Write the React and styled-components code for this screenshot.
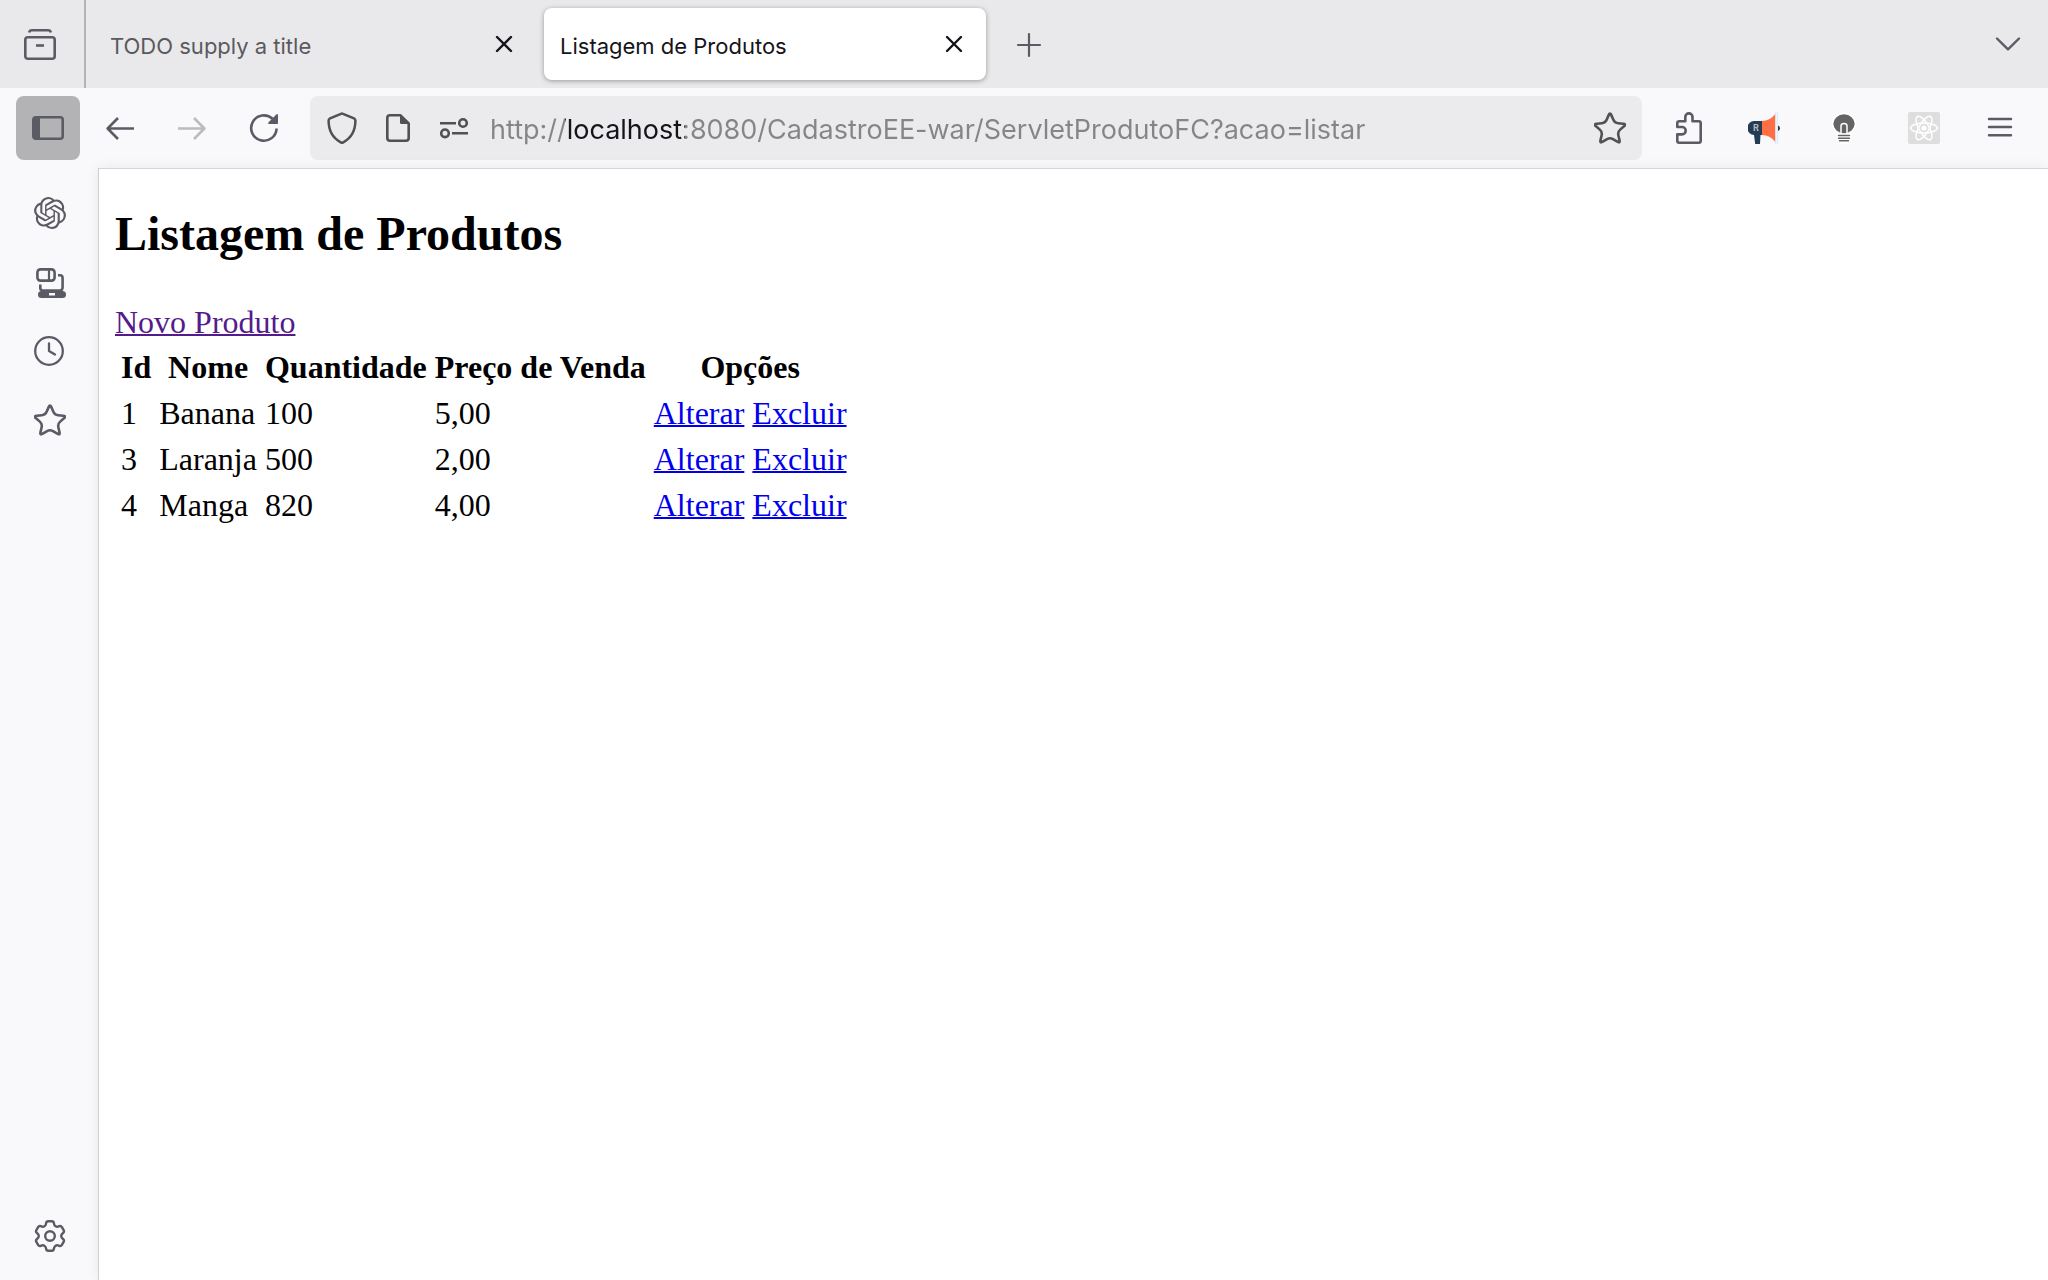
import React from "react";
import styled, { createGlobalStyle } from "styled-components";
import { SiOpenai } from "react-icons/si";

const ui = `Inter, "Liberation Sans", sans-serif`;
const serif = `"Liberation Serif", "Times New Roman", serif`;

const GlobalStyle = createGlobalStyle`
  *, *::before, *::after { box-sizing: border-box; }
  body { margin: 0; background: #f9f9fb; }
`;

const Window = styled.div`
  display: flex;
  flex-direction: column;
  min-height: 100vh;
  color: #5b5b66;
  font-family: ${ui};
`;

const TabBar = styled.header`
  display: flex;
  align-items: stretch;
  height: 88px;
  padding-right: 8px;
  background: #e9e9eb;
`;

const IconButton = styled.button`
  display: flex;
  align-items: center;
  justify-content: center;
  flex: none;
  width: ${(p) => p.$width || 64}px;
  height: 64px;
  padding: 0;
  border: 0;
  border-radius: 8px;
  background: ${(p) => (p.$pressed ? "#b3b3b5" : "transparent")};
  color: ${(p) => (p.$muted ? "#bbbbc0" : "#5b5b66")};
`;

const ViewArea = styled.div`
  display: flex;
  align-items: center;
  padding: 0 12px 0 8px;
  border-right: 2px solid #b3b3b5;
`;

const Tabs = styled.nav`
  display: flex;
  flex: 1;
  align-items: center;
  gap: 8px;
  padding-left: 8px;
`;

const Tab = styled.div`
  display: flex;
  align-items: center;
  justify-content: space-between;
  width: 442px;
  height: 72px;
  padding: 0 16px;
  border-radius: 8px;
  background: ${(p) => (p.$active ? "#fff" : "transparent")};
  box-shadow: ${(p) => (p.$active ? "0 1px 5px rgba(0, 0, 0, 0.35)" : "none")};
`;

const TabTitle = styled.span`
  padding-top: 4px;
  color: ${(p) => (p.$active ? "#15141a" : "#5a5a5e")};
  font-size: 22px;
  line-height: 32px;
  white-space: nowrap;
`;

const CloseButton = styled(IconButton)`
  height: 32px;
  color: #15141a;
`;

const TabEnd = styled.div`
  display: flex;
  align-items: center;
`;

const Toolbar = styled.div`
  display: flex;
  align-items: center;
  gap: 14px;
  height: 80px;
  padding: 0 16px;
`;

const ButtonGroup = styled.div`
  display: flex;
  align-items: center;
  gap: ${(p) => p.$gap || 0}px;
`;

const AddressBar = styled.form`
  display: flex;
  flex: 1;
  align-items: center;
  gap: 20px;
  min-width: 0;
  height: 64px;
  padding: 0 16px;
  border-radius: 8px;
  background: #ebebed;
`;

const AddressButton = styled(IconButton)`
  height: 32px;
  color: #505055;
`;

/* The host name is darker than the rest of the address. */
const AddressInput = styled.input`
  flex: 1;
  min-width: 0;
  height: 64px;
  padding: 2px 0 0;
  border: 0;
  outline: 0;
  background: linear-gradient(90deg, #858587 75px, #15141a 75px 195px, #858587 195px);
  background-clip: text;
  -webkit-background-clip: text;
  color: transparent;
  font-family: ${ui};
  font-size: 27px;
`;

const Main = styled.div`
  display: flex;
  flex: 1;
`;

const Sidebar = styled.aside`
  display: flex;
  flex-direction: column;
  align-items: center;
  justify-content: space-between;
  width: 98px;
  padding: 13px 0 12px 2px;
`;

const SideList = styled.div`
  display: flex;
  flex-direction: column;
  gap: 5px;
`;

const Page = styled.main`
  flex: 1;
  padding: 37px 16px 16px;
  border-top: 1px solid #d5d5d8;
  border-left: 1px solid #cfcfd3;
  background: #fff;
  box-shadow: 0 0 12px rgba(0, 0, 0, 0.07);
  color: #000;
  font-family: ${serif};
  font-size: 32px;
  line-height: 38px;
`;

const Heading = styled.h2`
  margin: 0 0 41px;
  font-size: 48px;
  line-height: 56px;
`;

const Link = styled.a`
  color: ${(p) => (p.$visited ? "#551a8b" : "#0000ee")};
  text-decoration: underline;
  text-decoration-thickness: 2px;
`;

const Table = styled.table`
  margin-top: 1px;
  border-spacing: 4px;

  th,
  td {
    padding: 2px;
  }
`;

/* Builds a closed path through the points, with rounded corners. */
function roundedPath(points, radius) {
  const n = points.length;
  const toward = (a, b) => {
    const d = Math.hypot(b[0] - a[0], b[1] - a[1]);
    const t = Math.min(radius / d, 0.5);
    return `${(a[0] + (b[0] - a[0]) * t).toFixed(2)} ${(a[1] + (b[1] - a[1]) * t).toFixed(2)}`;
  };
  return (
    points
      .map((p, i) => {
        const prev = points[(i + n - 1) % n];
        const next = points[(i + 1) % n];
        return `${i ? "L" : "M"}${toward(p, prev)}Q${p[0].toFixed(2)} ${p[1].toFixed(2)} ${toward(p, next)}`;
      })
      .join("") + "Z"
  );
}

const polar = (cx, cy, r, deg) => [
  cx + r * Math.sin((deg * Math.PI) / 180),
  cy - r * Math.cos((deg * Math.PI) / 180),
];

const starPath = roundedPath(
  Array.from({ length: 10 }, (_, i) => polar(16, 17.4, i % 2 ? 8 : 17.4, i * 36)),
  3.4
);

const gearPath = roundedPath(
  Array.from({ length: 6 }, (_, i) => i * 60).flatMap((a) => [
    polar(16, 16, 11.3, a - 22),
    polar(16, 16, 15.2, a - 14),
    polar(16, 16, 15.2, a + 14),
    polar(16, 16, 11.3, a + 22),
  ]),
  2
);

const Icon = ({ children, width = 2.6, size = 32 }) => (
  <svg
    width={size}
    height={size}
    viewBox={`0 0 ${size} ${size}`}
    fill="none"
    stroke="currentColor"
    strokeWidth={width}
    strokeLinecap="round"
    strokeLinejoin="round"
    aria-hidden="true"
  >
    {children}
  </svg>
);

const ViewIcon = () => (
  <Icon>
    <rect x="1.3" y="9.3" width="29.4" height="21.4" rx="2.5" />
    <path d="M5.2 4.4Q5.6 2.3 8 2.3H24Q26.4 2.3 26.8 4.4" strokeLinecap="butt" />
    <path d="M12 17.5H20" strokeLinecap="butt" />
  </Icon>
);
const SidebarIcon = () => (
  <Icon>
    <rect x="1.3" y="5.3" width="29.4" height="21.4" rx="2.5" />
    <path d="M1 6H8V26H1Z" fill="currentColor" stroke="none" />
  </Icon>
);
const BackIcon = () => (
  <Icon>
    <path d="M30 16.5H4M14 6 3.6 16.5 14 27" strokeLinecap="butt" />
  </Icon>
);
const ForwardIcon = () => (
  <Icon>
    <path d="M2 16.5H28M18 6 28.4 16.5 18 27" strokeLinecap="butt" />
  </Icon>
);
const ReloadIcon = () => (
  <Icon>
    <path d="M28.6 16.5A12.7 12.7 0 1 1 24.6 6.8" strokeLinecap="butt" />
    <path d="M30 2.8V11.2Q30 12 29.2 12H20.8Q19.6 11.4 20.3 10.5L28.6 2.3Q29.6 1.6 30 2.8Z" fill="currentColor" stroke="none" />
  </Icon>
);
const CloseIcon = () => (
  <Icon width={2.4}>
    <path d="M9 9 23 23M23 9 9 23" />
  </Icon>
);
const PlusIcon = () => (
  <Icon width={2.2}>
    <path d="M16 6V28M5 17H27" />
  </Icon>
);
const ChevronIcon = () => (
  <Icon width={2.4}>
    <path d="M5 10.5 16 21.3 27 10.5" />
  </Icon>
);
const ShieldIcon = () => (
  <Icon width={2.5}>
    <path d="M15 1.8Q16 1.2 17 1.8L28 6.3Q29.4 7 29.4 8.6Q29.4 24 17.2 30.3Q16 31 14.8 30.3Q2.6 24 2.6 8.6Q2.6 7 4 6.3Z" />
  </Icon>
);
const DocIcon = () => (
  <Icon>
    <path d="M7.5 3.3H18.5L26.7 11.5V26Q26.7 28.7 24 28.7H8Q5.3 28.7 5.3 26V6Q5.3 3.3 8 3.3Z" />
    <path d="M18 3 27 12H19.5Q18 12 18 10.5Z" fill="currentColor" stroke="none" />
  </Icon>
);
const PermissionsIcon = () => (
  <Icon>
    <path d="M2 11.3H18M14 21.3H30" strokeLinecap="butt" />
    <circle cx="25" cy="11" r="3.8" />
    <circle cx="7" cy="21.3" r="3.8" />
  </Icon>
);
const StarIcon = () => (
  <Icon>
    <path d={starPath} />
  </Icon>
);
const PuzzleIcon = () => (
  <Icon>
    <path d="M5.3 15V11.3Q5.3 9.3 7.3 9.3H13.3V5A3.6 3.6 0 0 1 20.5 5V9.3H26.7Q28.7 9.3 28.7 11.3V28.7Q28.7 30.7 26.7 30.7H7.3Q5.3 30.7 5.3 28.7V22.4H10A3.7 3.7 0 0 0 10 15Z" />
  </Icon>
);
const MegaphoneIcon = () => (
  <Icon>
    <g stroke="none">
      <path d="M6 9H14V23H12.5L12 32H7.2L6 23A6.5 7 0 0 1 6 9Z" fill="#243c54" />
      <path d="M14 9Q22 9 27.3 2V30Q22 23 14 23Z" fill="#ff6f43" />
      <path d="M27.3 0H30V32H27.3Z" fill="#cfe6f7" />
      <path d="M28.4 0H29.2V32H28.4Z" fill="#fff" />
      <path d="M30 13.5Q32 14 32 16.3Q32 18.6 30 19Z" fill="#243c54" />
      <text x="5" y="19" fill="#b9b9bd" fontFamily="Inter, sans-serif" fontSize="9" fontWeight="700">R</text>
    </g>
  </Icon>
);
const BulbIcon = () => (
  <Icon>
    <g stroke="#fff" strokeWidth="1.5">
      <path d="M10 19.5H22V29Q21 31 16 31Q11 31 10 29Z" fill="#fff" />
      <ellipse cx="16" cy="11.8" rx="11.4" ry="10.2" fill="#646464" />
      <path d="M13 21.5V14Q13 11.5 16 11.5Q19 11.5 19 14V21.5" />
    </g>
    <path d="M10.5 23.5H21.5M10.5 26.2H21.5M11.5 28.8H20.5" stroke="#646464" strokeWidth="1.4" />
  </Icon>
);
const AtomIcon = () => (
  <Icon>
    <rect width="32" height="32" rx="2" fill="#dedede" stroke="none" />
    <g stroke="#fff" strokeWidth="1.5">
      <ellipse cx="16" cy="16" rx="13.3" ry="5" />
      <ellipse cx="16" cy="16" rx="13.3" ry="5" transform="rotate(60 16 16)" />
      <ellipse cx="16" cy="16" rx="13.3" ry="5" transform="rotate(120 16 16)" />
      <circle cx="16" cy="16" r="2.6" fill="#fff" stroke="none" />
    </g>
  </Icon>
);
const MenuIcon = () => (
  <Icon width={2.4}>
    <path d="M5 7H27M5 15H27M5 23.3H27" />
  </Icon>
);
const DevicesIcon = () => (
  <Icon>
    <rect x="3.4" y="3.4" width="17.2" height="11.2" rx="3" />
    <path d="M15 3V15" strokeWidth="2.2" />
    <path d="M24 9.3H26Q28.6 9.3 28.6 12V21Q28.6 24.5 26 24.5H9Q6.3 24.5 6.3 22V18.5" strokeLinecap="butt" />
    <path d="M7.5 25H28.5A3.5 3.5 0 0 1 28.5 32H7.5A3.5 3.5 0 0 1 7.5 25ZM15 27V29.5H21V27Z" fill="currentColor" fillRule="evenodd" stroke="none" />
  </Icon>
);
const ClockIcon = () => (
  <Icon width={2.3}>
    <circle cx="15" cy="16" r="13.8" />
    <path d="M15 8.5V16L21 19.5" />
  </Icon>
);
const GearIcon = () => (
  <Icon width={2.4}>
    <path d={gearPath} />
    <circle cx="16" cy="16" r="4.8" />
  </Icon>
);

const tabs = [
  { title: "TODO supply a title", active: false },
  { title: "Listagem de Produtos", active: true },
];

const sideItems = [
  { label: "ChatGPT", icon: <SiOpenai size={32} aria-hidden="true" /> },
  { label: "Abas sincronizadas", icon: <DevicesIcon /> },
  { label: "Histórico", icon: <ClockIcon /> },
  { label: "Favoritos", icon: <StarIcon /> },
];

const products = [
  { id: 1, name: "Banana", quantity: 100, price: "5,00" },
  { id: 3, name: "Laranja", quantity: 500, price: "2,00" },
  { id: 4, name: "Manga", quantity: 820, price: "4,00" },
];

export default function App() {
  return (
    <Window>
      <GlobalStyle />
      <TabBar>
        <ViewArea>
          <IconButton aria-label="Firefox View"><ViewIcon /></IconButton>
        </ViewArea>
        <Tabs>
          {tabs.map((tab) => (
            <Tab key={tab.title} $active={tab.active}>
              <TabTitle $active={tab.active}>{tab.title}</TabTitle>
              <CloseButton $width={32} aria-label="Fechar aba"><CloseIcon /></CloseButton>
            </Tab>
          ))}
          <IconButton $width={70} aria-label="Nova aba"><PlusIcon /></IconButton>
        </Tabs>
        <TabEnd>
          <IconButton aria-label="Listar abas"><ChevronIcon /></IconButton>
        </TabEnd>
      </TabBar>

      <Toolbar>
        <ButtonGroup $gap={8}>
          <IconButton $pressed aria-label="Painel lateral"><SidebarIcon /></IconButton>
          <IconButton aria-label="Voltar"><BackIcon /></IconButton>
          <IconButton $muted aria-label="Avançar"><ForwardIcon /></IconButton>
          <IconButton aria-label="Recarregar"><ReloadIcon /></IconButton>
        </ButtonGroup>
        <AddressBar>
          <ButtonGroup $gap={24}>
            <AddressButton type="button" $width={32} aria-label="Proteção"><ShieldIcon /></AddressButton>
            <AddressButton type="button" $width={32} aria-label="Informações"><DocIcon /></AddressButton>
            <AddressButton type="button" $width={32} aria-label="Permissões"><PermissionsIcon /></AddressButton>
          </ButtonGroup>
          <AddressInput
            aria-label="Endereço"
            defaultValue="http://localhost:8080/CadastroEE-war/ServletProdutoFC?acao=listar"
          />
          <AddressButton type="button" $width={32} aria-label="Favoritar"><StarIcon /></AddressButton>
        </AddressBar>
        <ButtonGroup $gap={4}>
          <IconButton aria-label="Extensões"><PuzzleIcon /></IconButton>
          <ButtonGroup>
            <IconButton $width={80} aria-label="Megafone"><MegaphoneIcon /></IconButton>
            <IconButton $width={80} aria-label="Lâmpada"><BulbIcon /></IconButton>
            <IconButton $width={80} aria-label="React"><AtomIcon /></IconButton>
          </ButtonGroup>
          <IconButton aria-label="Menu"><MenuIcon /></IconButton>
        </ButtonGroup>
      </Toolbar>

      <Main>
        <Sidebar>
          <SideList>
            {sideItems.map((item) => (
              <IconButton key={item.label} aria-label={item.label}>{item.icon}</IconButton>
            ))}
          </SideList>
          <IconButton aria-label="Configurações"><GearIcon /></IconButton>
        </Sidebar>
        <Page>
          <Heading>Listagem de Produtos</Heading>
          <Link href="#novo" $visited>Novo Produto</Link>
          <Table>
            <thead>
              <tr>
                <th>Id</th>
                <th>Nome</th>
                <th>Quantidade</th>
                <th>Preço de Venda</th>
                <th>Opções</th>
              </tr>
            </thead>
            <tbody>
              {products.map((p) => (
                <tr key={p.id}>
                  <td>{p.id}</td>
                  <td>{p.name}</td>
                  <td>{p.quantity}</td>
                  <td>{p.price}</td>
                  <td>
                    <Link href="#alterar">Alterar</Link> <Link href="#excluir">Excluir</Link>
                  </td>
                </tr>
              ))}
            </tbody>
          </Table>
        </Page>
      </Main>
    </Window>
  );
}
